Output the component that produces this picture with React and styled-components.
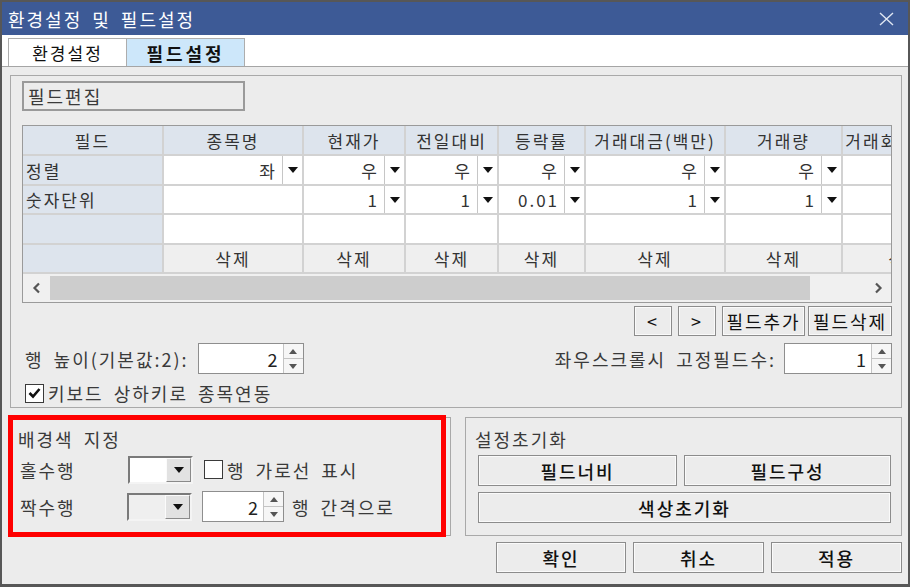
import React from 'react';
import styled, { createGlobalStyle } from 'styled-components';

const GlobalStyle = createGlobalStyle`
  html, body {
    margin: 0;
    padding: 0;
    background: #555;
  }
  body {
    font-family: "Noto Sans CJK KR", "Noto Sans", sans-serif;
    overflow: hidden;
  }
  * {
    box-sizing: border-box;
  }
`;

const Window = styled.div`
  width: 910px;
  height: 587px;
  border: 2px solid #575757;
  border-bottom-width: 3px;
  background: #ececec;
  display: flex;
  flex-direction: column;
  color: #3a3a3a;
  font-size: 18px;
  letter-spacing: 2px;
  word-spacing: 4px;
`;

const TitleBar = styled.div`
  height: 33px;
  flex: none;
  background: #3d5a96;
  color: #fff;
  display: flex;
  align-items: center;
  justify-content: space-between;
  padding: 0 14px 0 6px;
  font-size: 18px;
`;

const TabStrip = styled.div`
  height: 32px;
  flex: none;
  background: #fff;
  border-bottom: 1px solid #a5a5a5;
  display: flex;
  align-items: flex-end;
  padding-left: 6px;
`;

const Tab = styled.div`
  width: ${p => p.w}px;
  height: 28px;
  margin-left: ${p => (p.first ? 0 : -1)}px;
  border: 1px solid #adadad;
  border-bottom: none;
  display: flex;
  align-items: center;
  justify-content: center;
  background: ${p => (p.active ? '#cde7fa' : '#fff')};
  font-size: ${p => (p.active ? 18 : 17)}px;
  letter-spacing: ${p => (p.active ? 3 : 2)}px;
  font-weight: ${p => (p.active ? 700 : 400)};
  color: #111;
`;

const Body = styled.div`
  flex: 1;
  display: flex;
  flex-direction: column;
  padding: 8px 6px 0 8px;
`;

const Group = styled.div`
  position: relative;
  border: 1px solid #a9a9a9;
`;

const UpperGroup = styled(Group)`
  height: 333px;
  padding: 5px 9px 0 11px;
`;

const FieldEditBox = styled.div`
  width: 223px;
  height: 30px;
  border: 2px solid #9a9a9a;
  padding-left: 4px;
  display: flex;
  align-items: center;
`;

const GridFrame = styled.div`
  margin-top: 14px;
  width: 870px;
  height: 178px;
  border: 1px solid #9a9a9a;
  background: #fff;
  overflow: hidden;
  display: flex;
  flex-direction: column;
  font-size: 17px;
`;

const GridTable = styled.div`
  display: grid;
  grid-template-columns: 141px 140px 102px 93px 87px 140px 117px 128px;
  grid-template-rows: 30px 30px 29px 30px 29px;
  align-self: flex-start;
  width: max-content;
`;

const cellBg = {
  head: '#dde4ed',
  data: '#fff',
  foot: '#efefef',
};

const Cell = styled.div`
  border-right: 2px solid #d2d2d2;
  border-bottom: 2px solid #d2d2d2;
  background: ${p => cellBg[p.kind]};
  display: flex;
  align-items: center;
  justify-content: ${p => p.align || 'center'};
  padding: 0 ${p => (p.drop ? 0 : 3)}px 0 3px;
  white-space: nowrap;
  overflow: hidden;
  color: #333;
`;

const CellValue = styled.span`
  flex: 1;
  text-align: right;
  padding-right: 5px;
`;

const DropBtn = styled.span`
  width: 20px;
  height: 100%;
  border-left: 1px solid #c6c6c6;
  display: flex;
  align-items: center;
  justify-content: center;
`;

const ScrollBar = styled.div`
  height: 28px;
  flex: none;
  background: #f0f0f0;
  display: flex;
  align-items: center;
`;

const ScrollArrow = styled.div`
  width: 27px;
  height: 100%;
  display: flex;
  align-items: center;
  justify-content: center;
`;

const ScrollThumb = styled.div`
  width: 760px;
  height: 24px;
  background: #cdcdcd;
`;

const ScrollSpacer = styled.div`
  flex: 1;
`;

const ButtonRow = styled.div`
  margin-top: ${p => (p.nested ? 0 : 3)}px;
  display: flex;
  justify-content: flex-end;
  gap: ${p => p.gap || 6}px;
`;

const Button = styled.button`
  width: ${p => (p.w ? `${p.w}px` : 'auto')};
  height: ${p => p.h || 30}px;
  padding: 0;
  border: 1px solid #8c8c8c;
  box-shadow: inset 0 0 0 1px #fafafa;
  background: #ececec;
  font-family: inherit;
  font-size: 18px;
  letter-spacing: 2px;
  color: #111;
  font-weight: ${p => p.weight || 400};
  white-space: nowrap;
`;

const SettingsRow = styled.div`
  margin-top: 7px;
  height: 31px;
  padding-left: 3px;
  display: flex;
  align-items: center;
  justify-content: space-between;
`;

const LabelPair = styled.div`
  display: flex;
  align-items: center;
  gap: ${p => p.gap}px;
`;

const SpinBox = styled.div`
  width: ${p => p.w}px;
  height: 31px;
  border: 1px solid #8e8e8e;
  background: #fff;
  display: flex;
`;

const SpinValue = styled.div`
  flex: 1;
  display: flex;
  align-items: center;
  justify-content: flex-end;
  padding-right: 3px;
  color: #222;
`;

const SpinButtons = styled.div`
  width: 20px;
  display: flex;
  flex-direction: column;
  border-left: 1px solid #c4c4c4;
`;

const SpinHalf = styled.div`
  flex: 1;
  display: flex;
  align-items: center;
  justify-content: center;
  background: #f6f6f6;
  border-top: ${p => (p.lower ? '1px solid #c4c4c4' : 'none')};
`;

const CheckRow = styled.div`
  margin-top: ${p => p.mt || 0}px;
  padding-left: ${p => p.pl || 0}px;
  display: flex;
  align-items: center;
  gap: 4px;
`;

const CheckBox = styled.span`
  width: 19px;
  height: 19px;
  border: 1px solid #3a3a3a;
  background: #fff;
  display: flex;
  align-items: center;
  justify-content: center;
`;

const LowerRow = styled.div`
  margin-top: 9px;
  height: 119px;
  display: flex;
  gap: 14px;
`;

const ColorGroup = styled(Group)`
  width: 441px;
  padding: 9px 0 0 7px;

  &::after {
    content: '';
    position: absolute;
    top: -3px;
    left: -3px;
    right: 4px;
    bottom: -2px;
    border: 5px solid #ff0000;
    pointer-events: none;
  }
`;

const ResetGroup = styled(Group)`
  flex: 1;
  padding: 9px 10px 0 9px;
`;

const GroupTitle = styled.div`
  height: 24px;
  line-height: 24px;
`;

const FormRow = styled.div`
  margin-top: ${p => p.mt}px;
  height: 31px;
  display: flex;
  align-items: center;
  gap: ${p => p.gap || 11}px;
`;

const RowLabel = styled.div`
  width: 99px;
  padding-left: 2px;
`;

const ColorCombo = styled.div`
  width: 65px;
  height: 28px;
  border-style: solid;
  border-width: 2px;
  border-color: #7a7a7a #f4f4f4 #f4f4f4 #7a7a7a;
  display: flex;
`;

const Swatch = styled.div`
  flex: 1;
  background: ${p => p.color};
`;

const ComboBtn = styled.div`
  width: 25px;
  background: #e2e2e2;
  border-style: solid;
  border-width: 1px;
  border-color: #fbfbfb #8a8a8a #8a8a8a #fbfbfb;
  display: flex;
  align-items: center;
  justify-content: center;
`;

const ResetButtons = styled.div`
  margin-top: 4px;
  padding-left: 3px;
  display: grid;
  grid-template-columns: 199px 1fr;
  column-gap: 7px;
  row-gap: 6px;
`;

const WideButton = styled(Button)`
  grid-column: ${p => (p.span ? '1 / 3' : 'auto')};
`;

const FooterRow = styled.div`
  margin-top: 6px;
  display: flex;
  justify-content: flex-end;
  gap: 7px;
`;

const Trailing = styled.span`
  margin-left: -2px;
`;

const Down = ({ w = 10, h = 6 }) => (
  <svg width={w} height={h} viewBox="0 0 10 6">
    <polygon points="0,0 10,0 5,6" fill="#111" />
  </svg>
);

const SmallArrow = ({ up }) => (
  <svg width="8" height="5" viewBox="0 0 8 5">
    <polygon points={up ? '0,5 8,5 4,0' : '0,0 8,0 4,5'} fill="#555" />
  </svg>
);

const Chevron = ({ right }) => (
  <svg width="10" height="12" viewBox="0 0 10 12">
    <polyline
      points={right ? '3,1.5 7.5,6 3,10.5' : '7,1.5 2.5,6 7,10.5'}
      fill="none"
      stroke="#555"
      strokeWidth="2.2"
    />
  </svg>
);

const CloseIcon = () => (
  <svg width="15" height="14" viewBox="0 0 15 14">
    <path d="M1 1 L14 13 M14 1 L1 13" stroke="#dfe6f2" strokeWidth="1.4" fill="none" />
  </svg>
);

const CheckMark = () => (
  <svg width="13" height="12" viewBox="0 0 13 12">
    <polyline points="1.5,6 5,9.5 11.5,2" fill="none" stroke="#111" strokeWidth="2.6" />
  </svg>
);

const Spinner = ({ w, value }) => (
  <SpinBox w={w}>
    <SpinValue>{value}</SpinValue>
    <SpinButtons>
      <SpinHalf><SmallArrow up /></SpinHalf>
      <SpinHalf lower><SmallArrow /></SpinHalf>
    </SpinButtons>
  </SpinBox>
);

const columns = ['필드', '종목명', '현재가', '전일대비', '등락률', '거래대금(백만)', '거래량', '거래회전율(%)'];
const alignRow = [null, '좌', '우', '우', '우', '우', '우', null];
const unitRow = [null, null, '1', '1', '0.01', '1', '1', null];

const dropCell = (value, i, rowKey) =>
  value === null ? (
    <Cell key={rowKey + i} kind="data" />
  ) : (
    <Cell key={rowKey + i} kind="data" drop>
      <CellValue>{value}</CellValue>
      <DropBtn><Down /></DropBtn>
    </Cell>
  );

function FieldGrid() {
  return (
    <GridFrame>
      <GridTable>
        {columns.map(c => (
          <Cell key={'h' + c} kind="head">{c}</Cell>
        ))}

        <Cell kind="head" align="flex-start">정렬</Cell>
        {alignRow.slice(1).map((v, i) => dropCell(v, i, 'a'))}

        <Cell kind="head" align="flex-start">숫자단위</Cell>
        {unitRow.slice(1).map((v, i) => dropCell(v, i, 'u'))}

        <Cell kind="head" />
        {columns.slice(1).map(c => (
          <Cell key={'e' + c} kind="data" />
        ))}

        <Cell kind="head" />
        {columns.slice(1).map(c => (
          <Cell key={'d' + c} kind="foot">삭제</Cell>
        ))}
      </GridTable>
      <ScrollBar>
        <ScrollArrow><Chevron /></ScrollArrow>
        <ScrollThumb />
        <ScrollSpacer />
        <ScrollArrow><Chevron right /></ScrollArrow>
      </ScrollBar>
    </GridFrame>
  );
}

export default function App() {
  return (
    <>
      <GlobalStyle />
      <Window>
        <TitleBar>
          <span>환경설정 및 필드설정</span>
          <CloseIcon />
        </TitleBar>
        <TabStrip>
          <Tab w={119} first>환경설정</Tab>
          <Tab w={119} active>필드설정</Tab>
        </TabStrip>

        <Body>
          <UpperGroup>
            <FieldEditBox>필드편집</FieldEditBox>
            <FieldGrid />

            <ButtonRow>
              <Button w={38}>&lt;</Button>
              <Button w={38}>&gt;</Button>
              <ButtonRow nested gap={3}>
                <Button w={83}>필드추가</Button>
                <Button w={84}>필드삭제</Button>
              </ButtonRow>
            </ButtonRow>

            <SettingsRow>
              <LabelPair gap={9}>
                <span>행 높이(기본값:2):</span>
                <Spinner w={106} value="2" />
              </LabelPair>
              <LabelPair gap={8}>
                <span>좌우스크롤시 고정필드수:</span>
                <Spinner w={108} value="1" />
              </LabelPair>
            </SettingsRow>

            <CheckRow mt={6} pl={3}>
              <CheckBox><CheckMark /></CheckBox>
              <span>키보드 상하키로 종목연동</span>
            </CheckRow>
          </UpperGroup>

          <LowerRow>
            <ColorGroup>
              <GroupTitle>배경색 지정</GroupTitle>
              <FormRow mt={3}>
                <RowLabel>홀수행</RowLabel>
                <ColorCombo>
                  <Swatch color="#fff" />
                  <ComboBtn><Down /></ComboBtn>
                </ColorCombo>
                <CheckRow>
                  <CheckBox />
                  <span>행 가로선 표시</span>
                </CheckRow>
              </FormRow>
              <FormRow mt={6} gap={10}>
                <RowLabel>짝수행</RowLabel>
                <ColorCombo>
                  <Swatch color="#efefef" />
                  <ComboBtn><Down /></ComboBtn>
                </ColorCombo>
                <Spinner w={82} value="2" />
                <Trailing>행 간격으로</Trailing>
              </FormRow>
            </ColorGroup>

            <ResetGroup>
              <GroupTitle>설정초기화</GroupTitle>
              <ResetButtons>
                <WideButton h={31} weight={500}>필드너비</WideButton>
                <WideButton h={31} weight={500}>필드구성</WideButton>
                <WideButton h={31} weight={500} span>색상초기화</WideButton>
              </ResetButtons>
            </ResetGroup>
          </LowerRow>

          <FooterRow>
            <Button w={130} h={31} weight={500}>확인</Button>
            <Button w={131} h={31} weight={500}>취소</Button>
            <Button w={131} h={31} weight={500}>적용</Button>
          </FooterRow>
        </Body>
      </Window>
    </>
  );
}
